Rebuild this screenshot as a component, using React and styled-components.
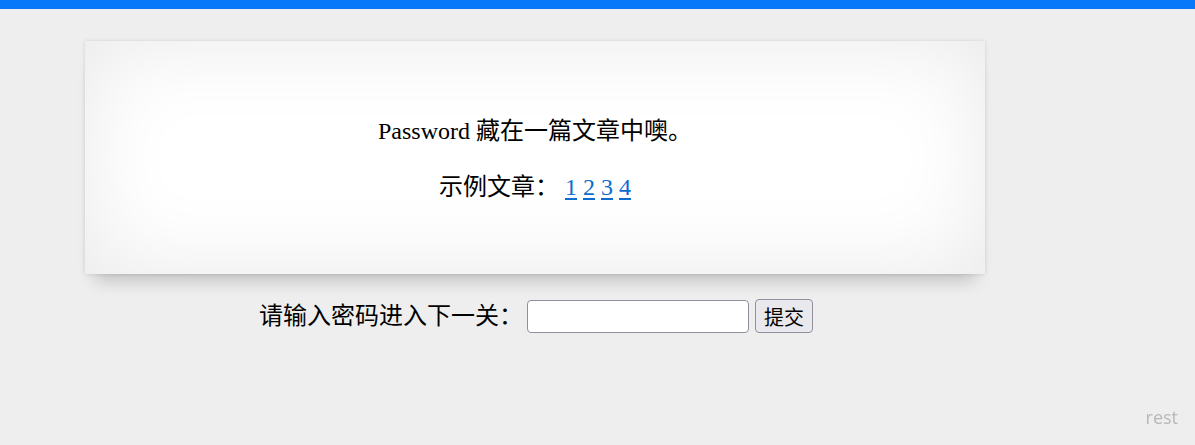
import React from "react";
import styled, { createGlobalStyle } from "styled-components";

const GlobalStyle = createGlobalStyle`
  html, body {
    margin: 0;
    padding: 0;
    background: #eeeeee;
    font-family: "Liberation Serif", "Noto Sans CJK SC", serif;
    color: #000;
  }
`;

const TopBar = styled.div`
  height: 9px;
  background: #0678f9;
`;

const Main = styled.main`
  padding: 32px 0 0 85px;
`;

const Card = styled.section`
  width: 900px;
  height: 233px;
  box-sizing: border-box;
  padding-top: 2px;
  display: flex;
  flex-direction: column;
  align-items: center;
  justify-content: center;
  gap: 22px;
  background: #fff;
  box-shadow: inset 0 0 90px rgba(0, 0, 0, 0.09), 0 0 4px rgba(0, 0, 0, 0.12),
    0 16px 16px -10px rgba(0, 0, 0, 0.2);
`;

const Line = styled.p`
  margin: 0;
  font-size: 24px;
  line-height: 34px;
`;

const ArticleLink = styled.a`
  color: #0a6ccf;
  text-decoration: underline;
  text-underline-offset: 3px;
`;

const Form = styled.form`
  width: 900px;
  margin-top: 25px;
  padding-left: 2px;
  box-sizing: border-box;
  display: flex;
  align-items: center;
  justify-content: center;
`;

const Label = styled.label`
  font-size: 24px;
  line-height: 34px;
  margin-right: 4px;
`;

const Input = styled.input`
  width: 222px;
  height: 33px;
  box-sizing: border-box;
  border: 1px solid #8f8f9d;
  border-radius: 4px;
  background: #fff;
  font-size: 18px;
  padding: 0 6px;
  margin: 0 6px 0 0;
`;

const Submit = styled.button`
  height: 34px;
  width: 58px;
  box-sizing: border-box;
  padding: 0;
  border: 1px solid #8f8f9d;
  border-radius: 4px;
  background: #e9e9ed;
  font-family: "Liberation Serif", "Noto Sans CJK SC", serif;
  font-size: 20px;
  color: #000;
`;

const Corner = styled.div`
  position: fixed;
  right: 17px;
  bottom: 16px;
  font-family: "Open Sans", sans-serif;
  font-size: 18px;
  color: #b8b8b8;
`;

const articles = [1, 2, 3, 4];

export default function App() {
  return (
    <>
      <GlobalStyle />
      <TopBar />
      <Main>
        <Card>
          <Line>Password 藏在一篇文章中噢。</Line>
          <Line>
            示例文章：{" "}
            {articles.map((n, i) => (
              <React.Fragment key={n}>
                <ArticleLink href={`#${n}`}>{n}</ArticleLink>
                {i < articles.length - 1 ? " " : ""}
              </React.Fragment>
            ))}
          </Line>
        </Card>
        <Form onSubmit={(e) => e.preventDefault()}>
          <Label htmlFor="pw">请输入密码进入下一关：</Label>
          <Input id="pw" type="text" />
          <Submit type="submit">提交</Submit>
        </Form>
      </Main>
      <Corner>rest</Corner>
    </>
  );
}
